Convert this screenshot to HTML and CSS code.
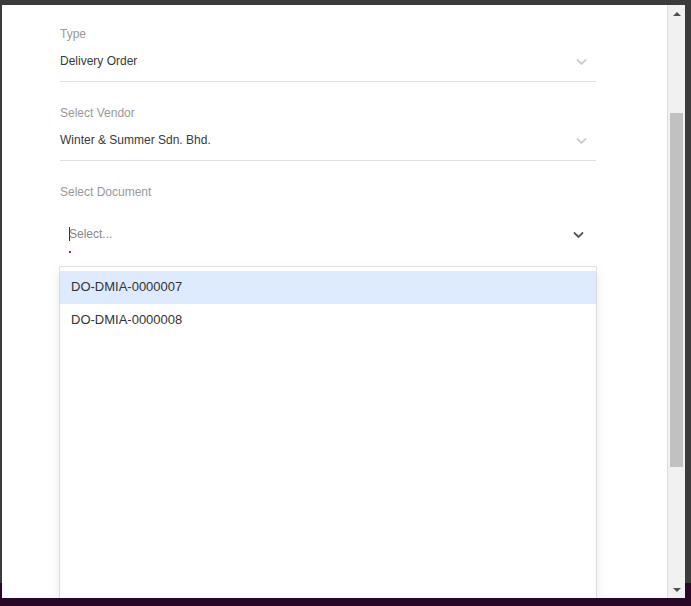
FILE: index.html
```html
<!DOCTYPE html>
<html lang="en">
<head>
<meta charset="utf-8">
<title>Select Document</title>
<link rel="stylesheet" href="styles.css">
</head>
<body>
<div class="window">
  <div class="content">
    <div class="form">
      <div class="field">
        <div class="label">Type</div>
        <div class="value-row">
          <span class="value">Delivery Order</span>
          <svg class="chev chev-light" viewBox="0 0 20 20" width="17" height="17"><path d="M4.516 7.548c0.436-0.446 1.043-0.481 1.576 0l3.908 3.747 3.908-3.747c0.533-0.481 1.141-0.446 1.574 0 0.436 0.445 0.408 1.197 0 1.615-0.406 0.418-4.695 4.502-4.695 4.502-0.217 0.223-0.502 0.335-0.787 0.335s-0.57-0.112-0.789-0.335c0 0-4.287-4.084-4.695-4.502s-0.436-1.170 0-1.615z"/></svg>
        </div>
      </div>
      <div class="field">
        <div class="label">Select Vendor</div>
        <div class="value-row">
          <span class="value">Winter &amp; Summer Sdn. Bhd.</span>
          <svg class="chev chev-light" viewBox="0 0 20 20" width="17" height="17"><path d="M4.516 7.548c0.436-0.446 1.043-0.481 1.576 0l3.908 3.747 3.908-3.747c0.533-0.481 1.141-0.446 1.574 0 0.436 0.445 0.408 1.197 0 1.615-0.406 0.418-4.695 4.502-4.695 4.502-0.217 0.223-0.502 0.335-0.787 0.335s-0.57-0.112-0.789-0.335c0 0-4.287-4.084-4.695-4.502s-0.436-1.170 0-1.615z"/></svg>
        </div>
      </div>
      <div class="field">
        <div class="label">Select Document</div>
        <div class="control">
          <div class="input-wrap">
            <span class="caret"></span><span class="placeholder">Select...</span>
            <span class="dot"></span>
          </div>
          <svg class="chev chev-dark" viewBox="0 0 20 20" width="17" height="17"><path d="M4.516 7.548c0.436-0.446 1.043-0.481 1.576 0l3.908 3.747 3.908-3.747c0.533-0.481 1.141-0.446 1.574 0 0.436 0.445 0.408 1.197 0 1.615-0.406 0.418-4.695 4.502-4.695 4.502-0.217 0.223-0.502 0.335-0.787 0.335s-0.57-0.112-0.789-0.335c0 0-4.287-4.084-4.695-4.502s-0.436-1.170 0-1.615z"/></svg>
        </div>
        <div class="menu">
          <div class="option option-focused">DO-DMIA-0000007</div>
          <div class="option">DO-DMIA-0000008</div>
        </div>
      </div>
    </div>
  </div>
  <div class="scrollbar">
    <div class="sb-btn"><span class="arrow-up"></span></div>
    <div class="sb-thumb"></div>
    <div class="sb-fill"></div>
    <div class="sb-btn"><span class="arrow-down"></span></div>
  </div>
</div>
</body>
</html>
```

FILE: styles.css
```css
html, body {
  margin: 0;
  padding: 0;
}

body {
  width: 691px;
  height: 606px;
  overflow: hidden;
  background: linear-gradient(to bottom, #3b3b3b 0, #3b3b3b 583px, #290827 583px, #290827 100%);
  font-family: "Liberation Sans", Arial, sans-serif;
}

.window {
  margin: 5px 6px 0 2px;
  height: 593px;
  display: flex;
  background: #ffffff;
}

.content {
  flex: 1;
  overflow: hidden;
  padding: 22px 0 0 58px;
}

.form {
  width: 536px;
}

.field + .field {
  margin-top: 24px;
}

.label {
  font-size: 12px;
  line-height: 14px;
  color: #999999;
}

.value-row {
  height: 40px;
  display: flex;
  align-items: center;
  justify-content: space-between;
  border-bottom: 1px solid #e1e1e1;
}

.value {
  font-size: 12px;
  color: #3a3a3a;
}

.chev {
  display: block;
  flex: none;
}

.chev-light {
  fill: #cccccc;
  margin-right: 6px;
  margin-top: 1px;
}

.chev-dark {
  fill: #555555;
  margin-right: 9px;
}

.control {
  height: 38px;
  margin-top: 16px;
  display: flex;
  align-items: center;
  justify-content: space-between;
}

.input-wrap {
  position: relative;
  display: flex;
  align-items: center;
  padding-left: 9px;
  height: 100%;
}

.caret {
  width: 1px;
  height: 14px;
  background: #333333;
  margin-right: -1px;
}

.placeholder {
  font-size: 12px;
  color: #888888;
}

.dot {
  position: absolute;
  left: 9px;
  bottom: 0;
  width: 2px;
  height: 2px;
  background: #8e1f9e;
}

.menu {
  margin-top: 14px;
  height: 340px;
  padding-top: 4px;
  background: #ffffff;
  box-shadow: 0 0 0 1px rgba(0, 0, 0, 0.1), 0 4px 11px rgba(0, 0, 0, 0.1);
}

.option {
  padding: 7px 11px 9px;
  font-size: 13px;
  line-height: 17px;
  color: #333333;
}

.option-focused {
  background: #deebff;
}

.scrollbar {
  width: 17px;
  flex: none;
  border-left: 1px solid #dcdcdc;
  background: #f1f1f1;
  display: flex;
  flex-direction: column;
  align-items: center;
}

.sb-btn {
  height: 17px;
  width: 17px;
  display: flex;
  align-items: center;
  justify-content: center;
  flex: none;
}

.arrow-up {
  width: 0;
  height: 0;
  border-left: 4px solid transparent;
  border-right: 4px solid transparent;
  border-bottom: 4px solid #505050;
}

.arrow-down {
  width: 0;
  height: 0;
  border-left: 4px solid transparent;
  border-right: 4px solid transparent;
  border-top: 4px solid #505050;
}

.sb-thumb {
  margin-top: 91px;
  width: 13px;
  height: 354px;
  background: #c1c1c1;
  flex: none;
}

.sb-fill {
  flex: 1;
}
```
